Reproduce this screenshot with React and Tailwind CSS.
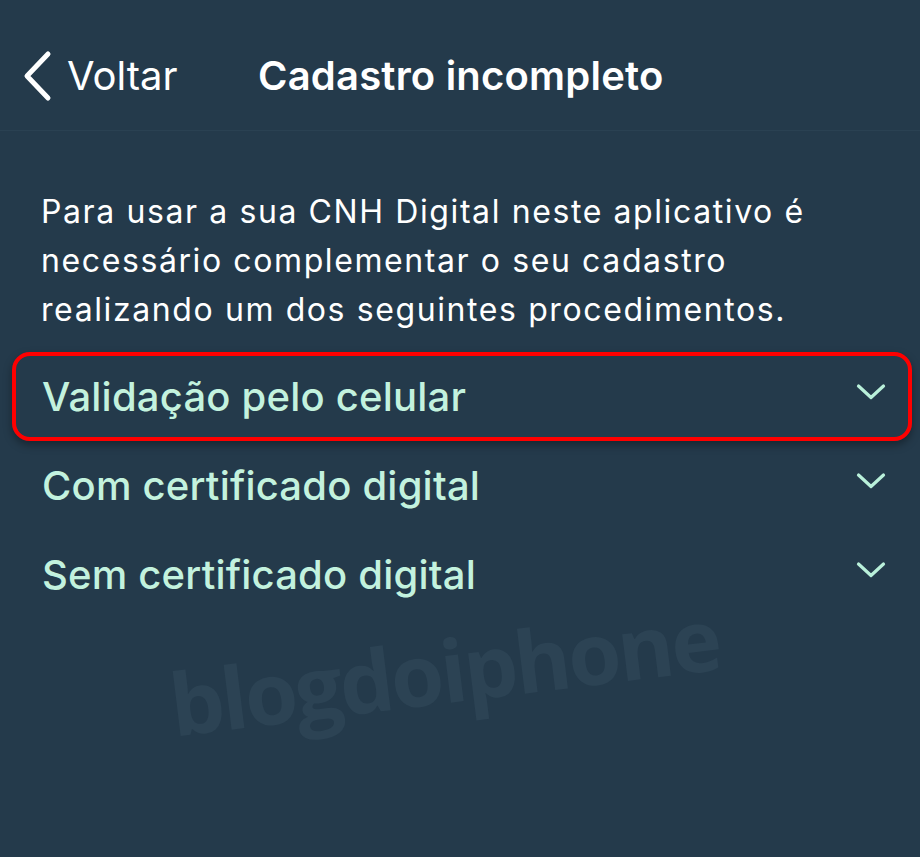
import React from 'react';

const options = ['Validação pelo celular', 'Com certificado digital', 'Sem certificado digital'];

function Chevron() {
  return (
    <svg width="30" height="18" viewBox="0 0 30 18" fill="none" className="shrink-0 mb-[10px]">
      <path d="M2.5 3 L15 14.5 L27.5 3" stroke="#b9f0da" strokeWidth="3.2" strokeLinecap="round" strokeLinejoin="round" />
    </svg>
  );
}

function App() {
  return (
    <div
      className="relative w-[920px] h-[857px] overflow-hidden bg-[#243a4b]"
      style={{ fontFamily: 'Inter, "Liberation Sans", sans-serif' }}
    >
      {/* Header */}
      <header className="h-[131px] flex items-center border-b border-[#2a4152] pt-[22px]">
        <div className="flex items-center pl-[20px] w-[258px]">
          <svg width="34" height="52" viewBox="0 0 34 52" fill="none" className="mr-[13px]">
            <path d="M28 4 L7 26 L28 48" stroke="#ffffff" strokeWidth="5" strokeLinecap="round" strokeLinejoin="round" />
          </svg>
          <span className="text-white text-[40px]">Voltar</span>
        </div>
        <h1 className="text-white text-[40px] font-semibold tracking-[0.2px]">Cadastro incompleto</h1>
      </header>

      {/* Intro text */}
      <p className="pl-[41px] pt-[56px] max-w-[840px] text-white text-[32px] leading-[49px] tracking-[1.6px]">
        Para usar a sua CNH Digital neste aplicativo é necessário complementar o seu cadastro
        realizando um dos seguintes procedimentos.
      </p>

      {/* Options */}
      <div className="mt-[18px] pl-[12px] pr-[8px] flex flex-col">
        {options.map((label, i) => (
          <div
            key={label}
            className={`h-[89px] flex items-center justify-between pl-[26px] pr-[22px] rounded-[18px] border-[4px] ${
              i === 0
                ? 'border-[#ff0000] shadow-[0_4px_8px_rgba(0,0,0,0.35)]'
                : 'border-transparent'
            }`}
          >
            <span className="text-[#c3f2de] text-[40px] font-medium tracking-[0.2px]">{label}</span>
            <Chevron />
          </div>
        ))}
      </div>

      {/* Watermark */}
      <div
        className="absolute left-[170px] top-[661px] leading-none text-[#2c4354] text-[86px] font-bold -rotate-[7deg] origin-left select-none tracking-[-3px]"
        style={{ fontFamily: '"Open Sans", "DejaVu Sans", sans-serif' }}
      >
        blogdoiphone
      </div>
    </div>
  );
}

export default App;
